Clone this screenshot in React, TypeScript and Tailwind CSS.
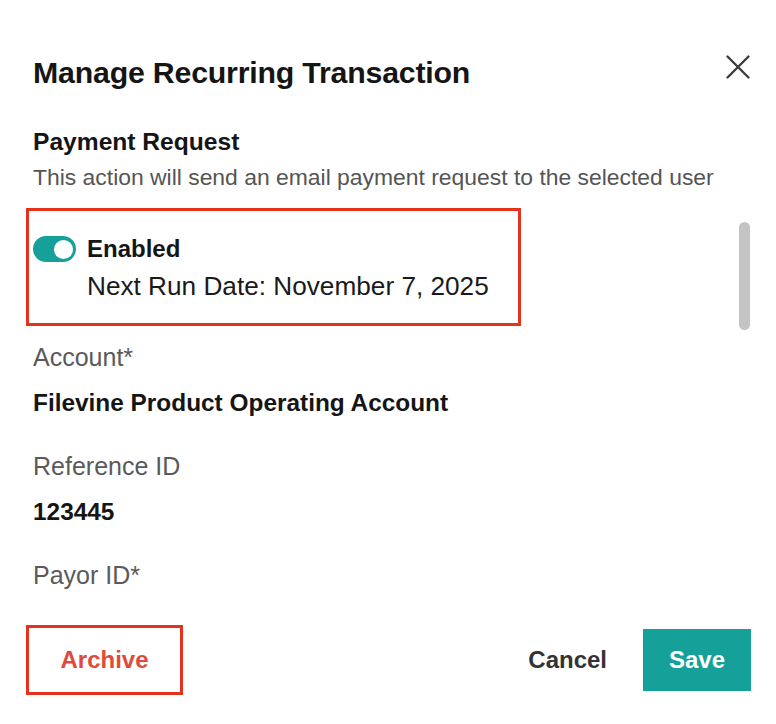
import React from "react";

const fields = [
  { label: "Account*", value: "Filevine Product Operating Account" },
  { label: "Reference ID", value: "123445" },
  { label: "Payor ID*", value: null },
];

export default function App() {
  return (
    <div className="flex h-[724px] w-[776px] flex-col overflow-hidden bg-white font-['Liberation_Sans',Arial,sans-serif] text-[#151515]">
      {/* header */}
      <div className="flex items-start justify-between pl-[33px] pr-[26px] pt-[55px]">
        <h1 className="text-[30.3px] font-bold leading-[36px] tracking-[-0.2px]">Manage Recurring Transaction</h1>
        <button aria-label="Close" className="text-[#3a3a3a]">
          <svg width="24" height="24" viewBox="0 0 24 24" fill="none">
            <path d="M1.5 1.5L22.5 22.5M22.5 1.5L1.5 22.5" stroke="currentColor" strokeWidth="2.3" strokeLinecap="round" />
          </svg>
        </button>
      </div>

      {/* body */}
      <div className="flex h-[519px] overflow-hidden">
        <div className="flex flex-1 flex-col pl-[33px] pt-[36px]">
          <div className="text-[24.6px] font-bold leading-[30px]">Payment Request</div>
          <div className="mt-[5px] text-[22.9px] leading-[30px] text-[#555555]">
            This action will send an email payment request to the selected user
          </div>

          <div className="-ml-[7px] mt-[16px] w-[495px] border-[3px] border-[#e5321d] pb-[21px] pl-[4px] pt-[23px]">
            <div className="flex h-[30px] items-center gap-[11px]">
              <button
                role="switch"
                aria-checked="true"
                className="flex h-[26px] w-[43px] items-center justify-end rounded-full bg-[#15a09a] px-[3px]"
              >
                <span className="block h-[19px] w-[19px] rounded-full bg-white" />
              </button>
              <span className="text-[24px] font-bold leading-[30px]">Enabled</span>
            </div>
            <div className="ml-[54px] mt-[6px] text-[26.2px] leading-[32px] text-[#1a1a1a]">
              Next Run Date: November 7, 2025
            </div>
          </div>

          <div className="mt-[15px] flex flex-col gap-[31px]">
            {fields.map((f) => (
              <div key={f.label} className="flex flex-col gap-[14px]">
                <div className="text-[25px] leading-[32px] text-[#5a5a5a]">{f.label}</div>
                {f.value && <div className="text-[24.4px] font-bold leading-[32px]">{f.value}</div>}
              </div>
            ))}
          </div>
        </div>

        {/* scrollbar */}
        <div className="mr-[26px] w-[11px]">
          <div className="mt-[131px] h-[108px] rounded-full bg-[#c4c4c4]" />
        </div>
      </div>

      {/* footer */}
      <div className="flex h-[100px] items-center justify-between pl-[26px] pr-[25px]">
        <button className="flex h-[70px] w-[157px] items-center justify-center border-[3px] border-[#e5321d] text-[24px] font-bold text-[#df4a3d]">
          Archive
        </button>
        <div className="flex items-center gap-[18px]">
          <button className="px-[18px] text-[24px] font-bold text-[#333333]">Cancel</button>
          <button className="flex h-[62px] w-[108px] items-center justify-center bg-[#15a09a] text-[24px] font-bold text-white">
            Save
          </button>
        </div>
      </div>
    </div>
  );
}
